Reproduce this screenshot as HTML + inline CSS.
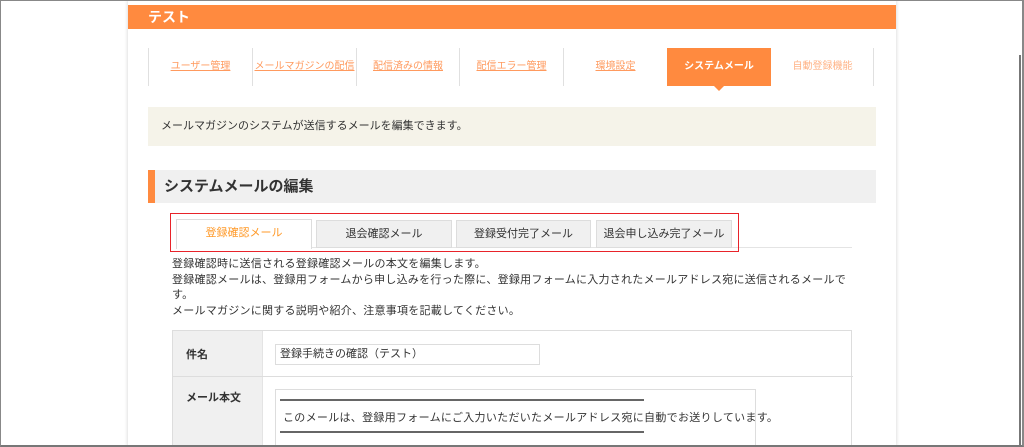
<!DOCTYPE html>
<html><head><meta charset="utf-8"><style>
*{margin:0;padding:0;box-sizing:border-box}
html,body{width:1024px;height:447px;overflow:hidden}
body{background:#fff;font-family:"Liberation Sans","Noto Sans CJK JP",sans-serif;position:relative;color:#333}
.frame{position:absolute;left:0;top:0;width:1024px;height:447px;border:1px solid #888;border-right:2px solid #888;border-bottom:2px solid #777}
.panel{position:absolute;left:128px;top:0;width:768px;height:447px;background:#fff;box-shadow:0 0 4px rgba(0,0,0,.18)}
.hdr{position:absolute;left:128px;top:5px;width:768px;height:24px;background:#ff8a3f;color:#fff;font-size:14px;font-weight:bold;line-height:24px;padding-left:20px}
.nav a{position:absolute;top:48px;height:38px;line-height:38px;text-align:center;font-size:10px;white-space:nowrap;color:#ff9a5e;text-decoration:underline;border-left:1px solid #e0e0e0}
.nav a.act{background:#ff8a3f;color:#fff;text-decoration:none;font-weight:bold;border:none}
.arrow{position:absolute;left:714px;top:86px;border-left:5px solid transparent;border-right:5px solid transparent;border-top:5px solid #ff8a3f}
.info{position:absolute;left:148px;top:107px;width:728px;height:39px;background:#f5f3e9;font-size:11px;line-height:39px;padding-left:13px}
.h2{position:absolute;left:148px;top:170px;width:728px;height:33px;background:#f0f0f0;border-left:7px solid #ff8a3f;font-size:15px;font-weight:bold;line-height:33px;padding-left:9px}
.red{position:absolute;left:170px;top:213px;width:569px;height:39px;border:1px solid #e8232a}
.tab{position:absolute;top:220px;height:28px;line-height:27px;font-size:11px;text-align:center;background:#f0f0f0;border:1px solid #ddd}
.tab.on{background:#fff;color:#ff9a2a;top:219px;height:30px;border-bottom:none}
.line{position:absolute;left:176px;top:247px;width:676px;height:1px;background:#e4e4e4}
.txt{position:absolute;left:172px;top:257px;font-size:11px;line-height:15.7px;white-space:nowrap;letter-spacing:0.25px}
.tbl{position:absolute;left:172px;top:330px;width:680px;height:130px;border:1px solid #ddd}
.lab{position:absolute;left:0;top:0;width:90px;height:130px;background:#f0f0f0;border-right:1px solid #e4e4e4}
.l{position:absolute;left:13px;font-size:11px;font-weight:bold}
.rowline{position:absolute;left:0;top:45px;width:680px;height:1px;background:#ddd}
.inp{position:absolute;left:102px;top:13px;width:265px;height:21px;border:1px solid #ddd;font-size:11px;line-height:19px;padding-left:4px}
.ta{position:absolute;left:102px;top:58px;width:481px;height:80px;border:1px solid #ddd}
.hr{position:absolute;left:4px;width:364px;height:2px;background:#666}
</style></head><body>
<div class="panel"></div>
<div class="hdr">テスト</div>
<div class="nav">
<a style="left:148px;width:104px">ユーザー管理</a>
<a style="left:252px;width:104px">メールマガジンの配信</a>
<a style="left:356px;width:103px">配信済みの情報</a>
<a style="left:459px;width:104px">配信エラー管理</a>
<a style="left:563px;width:104px">環境設定</a>
<a class="act" style="left:667px;width:104px">システムメール</a>
<a style="left:771px;width:103px;text-decoration:none;opacity:.75;border-left:none">自動登録機能</a>
<a style="left:873px;width:1px"></a>
</div>
<div class="arrow"></div>
<div class="info">メールマガジンのシステムが送信するメールを編集できます。</div>
<div class="h2">システムメールの編集</div>
<div class="line"></div>
<div class="tab on" style="left:176px;width:136px">登録確認メール</div>
<div class="tab" style="left:316px;width:136px">退会確認メール</div>
<div class="tab" style="left:456px;width:135px">登録受付完了メール</div>
<div class="tab" style="left:596px;width:136px">退会申し込み完了メール</div>
<div class="red"></div>
<div class="txt">登録確認時に送信される登録確認メールの本文を編集します。<br>登録確認メールは、登録用フォームから申し込みを行った際に、登録用フォームに入力されたメールアドレス宛に送信されるメールで<br>す。<br>メールマガジンに関する説明や紹介、注意事項を記載してください。</div>
<div class="tbl">
<div class="lab"></div>
<div class="rowline"></div>
<div class="l" style="top:15px">件名</div>
<div class="l" style="top:58px">メール本文</div>
<div class="inp">登録手続きの確認（テスト）</div>
<div class="ta">
<div class="hr" style="top:9px"></div>
<div style="position:absolute;left:7px;top:19px;font-size:11px;white-space:nowrap;letter-spacing:0.3px">このメールは、登録用フォームにご入力いただいたメールアドレス宛に自動でお送りしています。</div>
<div class="hr" style="top:41px"></div>
</div>
</div>
<div style="position:absolute;left:1019px;top:55px;width:2px;height:392px;background:#777"></div>
<div class="frame"></div>
</body></html>
